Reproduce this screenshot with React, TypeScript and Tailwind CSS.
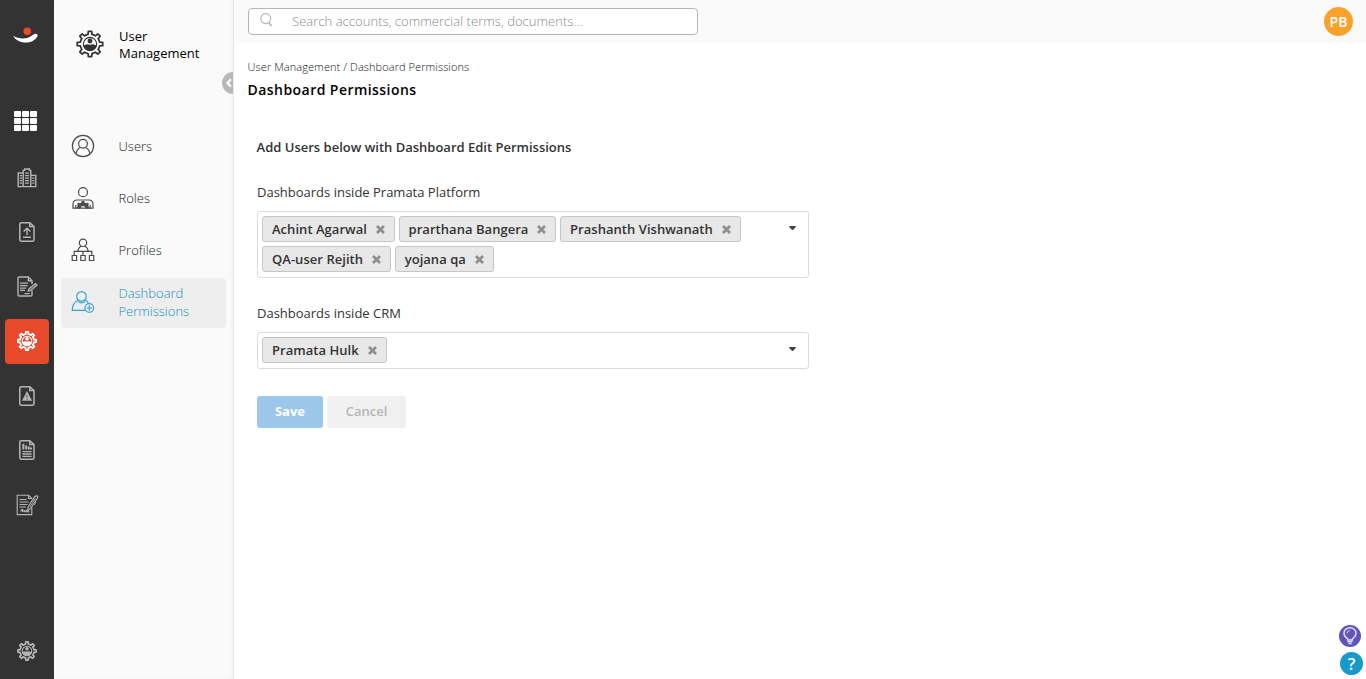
import { useState, type ReactNode } from "react"

// Outline of a cog with flat teeth, centred on (12, 12)
const gearPath = (outer: number, inner: number, teeth = 8) => {
  const step = (Math.PI * 2) / teeth
  const at = (r: number, a: number) =>
    `${(12 + r * Math.cos(a)).toFixed(2)} ${(12 + r * Math.sin(a)).toFixed(2)}`
  let d = ""
  for (let i = 0; i < teeth; i++) {
    const a = i * step - Math.PI / 2
    d += `${i === 0 ? "M" : "L"}${at(inner, a - step * 0.25)}L${at(outer, a - step * 0.17)}`
    d += `L${at(outer, a + step * 0.17)}L${at(inner, a + step * 0.25)}`
    d += `A${inner} ${inner} 0 0 1 ${at(inner, a + step * 0.75)}`
  }
  return d + "Z"
}

function UserGear({ size, stroke = 1.5 }: { size: number; stroke?: number }) {
  return (
    <svg width={size} height={size} viewBox="0 0 24 24" fill="none" stroke="currentColor" strokeWidth={stroke} strokeLinejoin="round">
      <path d={gearPath(11, 8.4)} />
      <circle cx="12" cy="12" r="5.7" strokeWidth={stroke * 0.65} />
      <circle cx="12" cy="9.4" r="2.1" fill="currentColor" stroke="none" />
      <path d="M6.5 13.2Q9 12.3 10.3 12.2Q12 13.2 13.7 12.2Q15 12.3 17.5 13.2A5.6 5.6 0 0 1 6.5 13.2Z" fill="currentColor" stroke="none" />
    </svg>
  )
}

function Logo() {
  return (
    <svg width="26" height="18" viewBox="0 0 26 18">
      <circle cx="14.3" cy="4.2" r="3.8" fill="#f04a25" />
      <path d="M.2 8.8C4.5 11.4 10 12.3 15 10.7C18 9.7 19.3 7.8 21.5 7C23.6 6.3 25.3 7.3 24.3 9.5C22.5 13.2 17.5 15.7 12.3 15.6C7.2 15.5 2.3 13.2.2 8.8Z" fill="#fff" />
    </svg>
  )
}

function DocShell({ children }: { children: ReactNode }) {
  return (
    <svg width="16" height="20" viewBox="0 0 16 20" fill="none" stroke="currentColor" strokeWidth="1.5">
      <path d="M10.8.8H2.2Q.8.8.8 2.2V17.8Q.8 19.2 2.2 19.2H13.6Q15 19.2 15 17.8V4.6Z" />
      <path d="M10.8.8V4.6H15" />
      {children}
    </svg>
  )
}

const railIcons = [
  {
    id: "accounts",
    icon: (
      <svg width="20" height="20" viewBox="0 0 20 20" fill="none" stroke="currentColor" strokeWidth="1.4">
        <path d="M6.2 18.6V2.4H7.6V1H12.4V2.4H13.8V18.6ZM6.2 5H1.2V18.6H6.2M13.8 7.4H18.8V18.6H13.8" />
        <path d="M8 5.2H12M8 7.7H12M8 10.2H12M8 12.7H12M8 15.2H12" strokeWidth="1.3" />
        <path d="M2.8 7.7H5M2.8 10.2H5M2.8 12.7H5M2.8 15.2H5M15.3 10.2H17.4M15.3 12.7H17.4M15.3 15.2H17.4" strokeWidth="1.2" />
      </svg>
    ),
  },
  {
    id: "upload",
    icon: (
      <DocShell>
        <path d="M8 13V6.5M4.6 9.6L8 6.3L11.4 9.6M4 15.3H12" strokeWidth="1.4" />
      </DocShell>
    ),
  },
  {
    id: "edit",
    icon: (
      <svg width="21" height="21" viewBox="0 0 21 21" fill="none" stroke="currentColor" strokeWidth="1.4">
        <path d="M15 8V4.8L11.4 1H2.2Q1 1 1 2.2V18.8Q1 20 2.2 20H13.8Q15 20 15 18.8V14.6M11.4 1V4.8H15" />
        <path d="M3 7.2H11M3 9.7H10.5M3 12.2H9.2M3 14.4H8M7.5 17.6H12.6" strokeWidth="1.2" />
        <path d="M12 12.8L18.5 7.5L20.1 9.2L13.8 14.6L11 15.2Z" fill="currentColor" fillOpacity="0.45" strokeWidth="1.1" />
      </svg>
    ),
  },
  { id: "users", icon: <UserGear size={20} stroke={2.2} /> },
  {
    id: "alerts",
    icon: (
      <DocShell>
        <path d="M8 5L13 14.8H3Z" fill="currentColor" stroke="none" />
        <path d="M8 8.8V11.6M8 12.6V13.8" stroke="#333" strokeWidth="0.7" />
      </DocShell>
    ),
  },
  {
    id: "reports",
    icon: (
      <DocShell>
        <path d="M4.4 3.8V9.6M7.2 5.5V9.6M9.8 6.5V9.6M12 7.5V9.6" strokeWidth="2" />
        <path d="M3.4 11.7H12.6M3.4 14H12.6M3.4 16.3H12.6" strokeWidth="1.3" />
      </DocShell>
    ),
  },
  {
    id: "contracts",
    icon: (
      <svg width="23" height="22" viewBox="0 0 23 22" fill="none" stroke="currentColor" strokeWidth="1.1">
        <path d="M15.8 4.5L12.5 1.2H1.2V20.6H15.8V13M12.5 1.2V4.5H15.8" />
        <path d="M3.5 5.5H10.5M3.5 8H12.5M3.5 10.5H11.5M3.5 13H10" />
        <path d="M4.5 17.5Q6.5 14.2 6.8 16Q5.6 18.5 7.5 17Q8.6 15.8 8.6 17.5L10.3 16.5V17.7H13.5" />
        <path d="M12.2 12.5L18.4 3Q20.7 1.2 21.8 2.2Q22.2 3.5 20.8 5L14.6 14.5L11.5 17Z" />
        <path d="M17.2 5L19.5 6.7M20 7.8L18.2 11M13.5 13.3L19.3 4.6" strokeWidth="0.9" />
      </svg>
    ),
  },
]

const menu = [
  {
    label: "Users",
    icon: (
      <>
        <circle cx="12" cy="12" r="10.6" />
        <circle cx="12" cy="9.8" r="4.4" />
        <path d="M5 19.8Q5.6 15.5 9.3 13.4M14.7 13.4Q18.4 15.5 19 19.8" />
      </>
    ),
  },
  {
    label: "Roles",
    icon: (
      <>
        <circle cx="12" cy="6.2" r="4.5" />
        <path d="M2 22.2V18.3Q2 14 6.2 14H17.8Q22 14 22 18.3V22.2Z" />
        <path d="M6 22.4A6 6 0 0 1 6.8 19L5.9 17.9L7.5 16.4L8.7 17.2L10.5 16.4V15H13.5V16.4L15.3 17.2L16.5 16.4L18.1 17.9L17.2 19A6 6 0 0 1 18 22.4H14.3A2.3 2.3 0 0 0 9.7 22.4Z" fill="currentColor" stroke="none" />
        <path d="M4.8 19V22.4M19.2 19V22.4" />
      </>
    ),
  },
  {
    label: "Profiles",
    icon: (
      <>
        <circle cx="12" cy="4.8" r="3.7" />
        <path d="M6.8 13.4Q7.2 9.5 10 8.2M17.2 13.4Q16.8 9.5 14 8.2M3.2 17.5V13.4H20.8V17.5M12 13.4V17.5" />
        <path d="M1.2 17.5H5.6V22.5H1.2ZM9.8 17.5H14.2V22.5H9.8ZM18.4 17.5H22.8V22.5H18.4Z" />
      </>
    ),
  },
  {
    label: "Dashboard Permissions",
    icon: (
      <>
        <circle cx="10.5" cy="6.4" r="4.8" />
        <path d="M7 10.2Q1.4 12.9 1.2 20.4H14.3M14 10.2Q16.5 11.1 17.4 13.3M7 11.8Q10.5 13.9 14 11.8" />
        <circle cx="18.3" cy="18" r="4.3" />
        <path d="M18.3 15.3V20.7M15.6 18H21" />
      </>
    ),
  },
]

function Chip({ name, onRemove }: { name: string; onRemove: () => void }) {
  return (
    <span className="flex h-[26px] items-center rounded-[3px] border border-[#c6c6c6] bg-[#e8e8e8] pl-[9px] pr-2 text-[13px] font-semibold tracking-[0.04px] text-[#333]">
      <span className="pt-0.5">{name}</span>
      <button onClick={onRemove} className="ml-2 flex h-[11px] w-[11px] items-center justify-center pt-px text-[#8e8e8e]">
        <svg width="9" height="9" viewBox="0 0 9 9" stroke="currentColor" strokeWidth="2.7">
          <path d="M1 1L8 8M8 1L1 8" />
        </svg>
      </button>
    </span>
  )
}

function MultiSelect({ label, initial }: { label: string; initial: string[] }) {
  const [selected, setSelected] = useState(initial)

  return (
    <div className="flex flex-col">
      <label className="h-[18px] text-[13px] leading-[18px] text-[#333]">{label}</label>
      <div className="mt-2.5 flex w-[552px] items-start justify-between rounded-[3px] border border-[#dcdcdc] bg-white py-1 pl-1 pr-3">
        <div className="flex w-[500px] flex-wrap gap-x-[3.6px] gap-y-[3.6px] pb-[1.2px]">
          {selected.map((name) => (
            <Chip key={name} name={name} onRemove={() => setSelected(selected.filter((n) => n !== name))} />
          ))}
        </div>
        <svg className="mt-2.5" width="7" height="4" viewBox="0 0 7 4" fill="#444">
          <path d="M0 .8Q0 0 .8 0H6.2Q7 0 7 .8L4.2 3.7Q3.5 4.2 2.8 3.7Z" />
        </svg>
      </div>
    </div>
  )
}

function Rail() {
  return (
    <nav className="flex w-[54px] shrink-0 flex-col bg-[#333] text-[#b5b5b5]">
      <div className="flex h-[84px] pl-[13px] pt-[27px]">
        <Logo />
      </div>
      <div className="flex h-[66.5px] pl-3.5 pt-[27px]">
        <div className="grid h-5 w-[23px] grid-cols-3 gap-px">
          {Array.from({ length: 9 }, (_, i) => (
            <span key={i} className="rounded-[1px] bg-white" />
          ))}
        </div>
      </div>
      {railIcons.map(({ id, icon }) => (
        <div key={id} className="flex h-[54.5px] items-center justify-center">
          <button
            className={
              id === "users"
                ? "flex h-[45px] w-11 items-center justify-center rounded bg-[#e8492a] text-white"
                : "flex h-[45px] w-11 items-center justify-center"
            }
          >
            {icon}
          </button>
        </div>
      ))}
      <div className="mt-auto flex justify-center pb-[18px]">
        <UserGear size={20} stroke={2} />
      </div>
    </nav>
  )
}

function Sidebar() {
  return (
    <aside className="relative flex w-[180px] shrink-0 flex-col overflow-hidden border-r border-[#e6e6e6] bg-[#fafafa] shadow-[inset_-2px_0_2px_#f3f3f3]">
      <div className="flex items-start pl-[22px] pt-7">
        <span className="mt-[2px] text-[#333]">
          <UserGear size={28} />
        </span>
        <h2 className="ml-[15px] w-24 text-[13px] leading-[17px] text-black">User Management</h2>
      </div>
      <button className="absolute -right-[11px] top-[72px] flex h-[22px] w-[22px] items-center rounded-full bg-[#b8b8b8] pl-1">
        <svg width="6" height="10" viewBox="0 0 6 10" fill="none" stroke="#fff" strokeWidth="2.2">
          <path d="M5 1.2L1.5 5L5 8.8" />
        </svg>
      </button>
      <ul className="mt-[60px] flex flex-col gap-0.5 px-[7px]">
        {menu.map(({ label, icon }) => {
          const active = label === "Dashboard Permissions"
          return (
            <li
              key={label}
              className={
                active
                  ? "flex h-[50px] items-center rounded bg-[#eee] pb-0.5 pl-2.5 text-[#1590c0]"
                  : "flex h-[50px] items-center pb-0.5 pl-2.5 text-[#222]"
              }
            >
              <svg width="24" height="24" viewBox="0 0 24 24" fill="none" stroke="currentColor" strokeWidth="1.2" className="shrink-0 opacity-80">
                {icon}
              </svg>
              <span className="ml-[23.5px] w-24 text-[13px] font-[340] leading-[18px]">{label}</span>
            </li>
          )
        })}
      </ul>
    </aside>
  )
}

export default function App() {
  return (
    <div className="flex h-[679px] w-[1366px] overflow-hidden bg-white font-['Open_Sans',sans-serif]">
      <Rail />
      <Sidebar />
      <div className="flex flex-1 flex-col">
        <header className="flex h-[43px] items-center justify-between bg-[#fafafa] pl-3.5 pr-[13px]">
          <div className="flex h-[27px] w-[450px] items-center rounded border border-[#b5b5b5] bg-white pl-[11px]">
            <svg width="13" height="14" viewBox="0 0 13 14" fill="none" stroke="#b5b5b5" strokeWidth="1.1" className="mb-1">
              <circle cx="5.7" cy="5.6" r="5" />
              <path d="M8.8 9.4L11.5 13" strokeWidth="1.6" />
            </svg>
            <input
              placeholder="Search accounts, commercial terms, documents..."
              className="ml-[19px] w-96 text-[13px] font-light tracking-[0.04px] outline-none placeholder:text-[#8a8a8a]"
            />
          </div>
          <span className="flex h-[29px] w-[29px] items-center justify-center rounded-full bg-[#f9a12b] text-[14px] font-semibold text-white">
            PB
          </span>
        </header>

        <main className="flex flex-1 flex-col pl-[13.6px]">
          <p className="mt-4 text-[11px] font-light leading-4 tracking-[0.08px] text-[#111]">User Management / Dashboard Permissions</p>
          <h1 className="mt-[5px] text-[14px] font-semibold leading-5 tracking-[0.44px] text-black">Dashboard Permissions</h1>

          <div className="flex flex-col pl-[9.4px] pt-[38px]">
            <h3 className="-ml-[0.4px] text-[13px] font-semibold leading-[18px] text-[#333]">
              Add Users below with Dashboard Edit Permissions
            </h3>
            <div className="mt-[27px] flex flex-col gap-[26px]">
              <MultiSelect
                label="Dashboards inside Pramata Platform"
                initial={["Achint Agarwal", "prarthana Bangera", "Prashanth Vishwanath", "QA-user Rejith", "yojana qa"]}
              />
              <MultiSelect label="Dashboards inside CRM" initial={["Pramata Hulk"]} />
            </div>
            <div className="mt-[27px] flex gap-1 text-[13px] font-semibold">
              <button className="h-8 w-[66px] rounded-[3px] bg-[#9ac7ea] font-bold text-white">Save</button>
              <button className="h-8 w-[79px] rounded-[3px] bg-[#f0f0f0] text-[#b5b5b5]">Cancel</button>
            </div>
          </div>
        </main>

        <div className="flex flex-col items-end gap-[5px] pb-1 pr-[3px]">
          <button className="mr-0.5 flex h-[22px] w-[22px] items-center justify-center rounded-full bg-[#6055b8]">
            <svg width="14" height="18" viewBox="0 0 14 18" fill="none" stroke="#e6e2f7" strokeWidth="1.4">
              <path d="M4.6 13V11.8Q1 9.5 1 6.3A6 5.6 0 0 1 13 6.3Q13 9.5 9.4 11.8V13Z" />
              <path d="M4 6.5Q4.2 4 6.8 3.6" strokeWidth="1" />
              <path d="M4.6 14.8H9.4M5.5 16.6H8.5" />
            </svg>
          </button>
          <button className="flex h-[23px] w-[23px] items-center justify-center rounded-full bg-[#1899cb] text-[17px] font-semibold leading-none text-white">
            ?
          </button>
        </div>
      </div>
    </div>
  )
}
